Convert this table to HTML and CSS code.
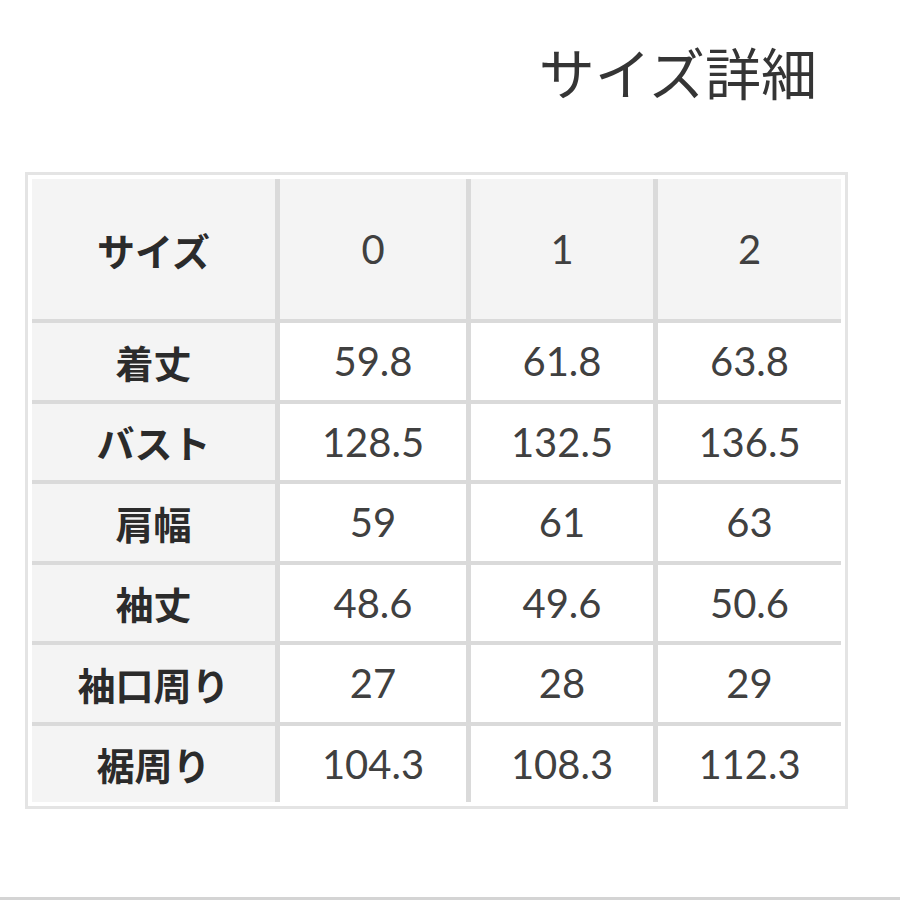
FILE: index.html
```html
<!DOCTYPE html>
<html lang="ja">
<head>
<meta charset="utf-8">
<title>サイズ詳細</title>
<link rel="stylesheet" href="styles.css">
</head>
<body>
<div class="page">
  <h1 class="title">サイズ詳細</h1>
  <div class="sheet">
    <div class="grid">
      <div class="cell head label">サイズ</div>
      <div class="cell head num">0</div>
      <div class="cell head num">1</div>
      <div class="cell head num">2</div>

      <div class="cell label">着丈</div>
      <div class="cell num">59.8</div>
      <div class="cell num">61.8</div>
      <div class="cell num">63.8</div>

      <div class="cell label">バスト</div>
      <div class="cell num">128.5</div>
      <div class="cell num">132.5</div>
      <div class="cell num">136.5</div>

      <div class="cell label">肩幅</div>
      <div class="cell num">59</div>
      <div class="cell num">61</div>
      <div class="cell num">63</div>

      <div class="cell label">袖丈</div>
      <div class="cell num">48.6</div>
      <div class="cell num">49.6</div>
      <div class="cell num">50.6</div>

      <div class="cell label">袖口周り</div>
      <div class="cell num">27</div>
      <div class="cell num">28</div>
      <div class="cell num">29</div>

      <div class="cell label">裾周り</div>
      <div class="cell num">104.3</div>
      <div class="cell num">108.3</div>
      <div class="cell num">112.3</div>
    </div>
  </div>
  <div class="footer-line"></div>
</div>
</body>
</html>
```

FILE: styles.css
```css
html, body {
  margin: 0;
  padding: 0;
  background: #ffffff;
}

.page {
  width: 900px;
  height: 900px;
  display: flex;
  flex-direction: column;
  overflow: hidden;
  font-family: "Noto Sans CJK JP", "Noto Sans", sans-serif;
}

.title {
  margin: 0;
  padding: 43px 83px 0 0;
  text-align: right;
  font-size: 56px;
  line-height: 56px;
  font-weight: 400;
  color: #353535;
  letter-spacing: 0;
}

.sheet {
  margin: 73px 0 0 25px;
  width: 823px;
  box-sizing: border-box;
  border: 3px solid #e4e4e4;
  padding: 4px;
  background: #ffffff;
}

.grid {
  display: grid;
  grid-template-columns: 243px 186px 182px 183px;
  grid-template-rows: 140px repeat(6, 76.5px);
  column-gap: 5px;
  row-gap: 4px;
  background: #dadada;
}

.cell {
  display: flex;
  align-items: center;
  justify-content: center;
  background: #ffffff;
}

.cell.head,
.cell.label {
  background: #f4f4f4;
}

.label {
  font-family: "Noto Sans CJK JP", sans-serif;
  font-weight: 700;
  font-size: 38px;
  color: #2b2b2b;
}

.num {
  font-family: Lato, "Noto Sans", sans-serif;
  font-weight: 400;
  font-size: 40px;
  color: #404040;
}

.footer-line {
  margin-top: auto;
  height: 3px;
  background: #d4d4d4;
}
```
